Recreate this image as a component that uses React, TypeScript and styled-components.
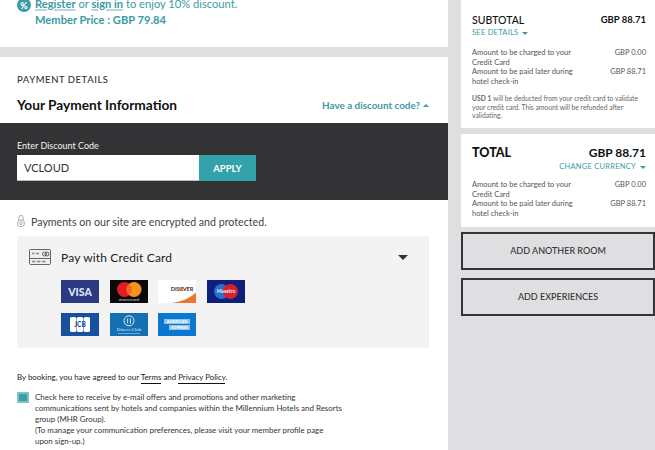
import React from "react";
import styled, { createGlobalStyle } from "styled-components";

const Global = createGlobalStyle`
  html, body { margin: 0; padding: 0; background: #dfdfe1; overflow: hidden; }
  body { font-family: Lato, "Open Sans", sans-serif; }
`;
const teal = "#3b9aa3";

const Page = styled.div`
  display: flex; width: 655px; height: 450px; overflow: hidden; background: #dfdfe1;
`;
const Main = styled.main`
  width: 448px; flex: none; display: flex; flex-direction: column;
  & > * { flex-shrink: 0; }
`;
const Promo = styled.section`
  height: 47px; background: #fff; display: flex; gap: 4px; padding-left: 17px; box-sizing: border-box; overflow: hidden;
`;
const PromoBadge = styled.div`
  width: 14px; height: 14px; border-radius: 50%; background: ${teal}; color: #fff; margin-top: -2px;
  display: flex; align-items: center; justify-content: center; font-size: 9px; font-weight: 900; flex: none;
`;
const PromoText = styled.div`
  font-size: 11.15px; line-height: 16px; color: ${teal}; margin-top: -4px;
`;
const PromoLink = styled.a`
  font-weight: 700; text-decoration: underline; text-decoration-color: #b5dadd; text-decoration-thickness: 2px; text-underline-offset: 1px;
`;
const PromoPrice = styled.div` font-weight: 700; `;
const Band = styled.div` height: 10px; background: #dfdfe1; `;
const Details = styled.section`
  height: 66px; background: #fff; box-sizing: border-box; padding: 16px 19px 0 17px;
`;
const Eyebrow = styled.div`
  font-size: 9.5px; line-height: 13px; letter-spacing: .55px; color: #333; font-weight: 500;
`;
const TitleRow = styled.div`
  display: flex; justify-content: space-between; align-items: center; margin-top: 10px;
`;
const Title = styled.h2` margin: 0; font-size: 13.7px; line-height: 18px; font-weight: 700; color: #111; `;
const DiscountLink = styled.a`
  font-size: 9.9px; font-weight: 700; color: ${teal}; display: flex; align-items: center; gap: 3px;
`;
const Caret = styled.span<{ $up?: boolean }>`
  display: inline-block; width: 0; height: 0;
  border-left: 3px solid transparent; border-right: 3px solid transparent;
  ${p => p.$up ? "border-bottom: 3px solid currentColor;" : "border-top: 3px solid currentColor;"}
`;
const DiscountPanel = styled.section`
  height: 77px; background: #333335; box-sizing: border-box; padding: 17px 0 0 17px;
`;
const DiscountLabel = styled.label` display: block; font-size: 9px; line-height: 12px; color: #f2f2f2; `;
const DiscountRow = styled.div` display: flex; margin-top: 3px; `;
const CodeInput = styled.div`
  width: 182px; height: 26px; background: #fff; box-sizing: border-box; padding-left: 7px; border-bottom: 1px solid #bbb;
  font-size: 11px; line-height: 26px; color: #333;
`;
const ApplyButton = styled.button`
  width: 57px; height: 26px; border: 0; padding: 0; background: #33a2ab; color: #fff; font: 700 9.5px Lato, sans-serif;
`;
const PaymentArea = styled.section`
  flex: 1; background: #fff; padding: 0 19px 0 17px;
`;
const SecureNote = styled.div`
  display: flex; align-items: center; gap: 6px; margin-top: 14px; height: 14px;
  font-size: 10.65px; color: #444;
`;
const CardPanel = styled.div`
  height: 112px; margin-top: 8px; background: #f3f3f4; box-sizing: border-box; padding: 10px 21px 0 12px;
`;
const CardHead = styled.div` display: flex; align-items: center; gap: 10px; height: 22px; `;
const CardHeadLabel = styled.div` flex: 1; font-size: 12px; color: #222; letter-spacing: .15px; `;
const HeadCaret = styled.span`
  width: 0; height: 0; border-left: 5px solid transparent; border-right: 5px solid transparent; border-top: 5px solid #333;
`;
const CardGrid = styled.div`
  display: grid; grid-template-columns: repeat(4, 38px); gap: 10px 10.67px; margin: 12px 0 0 32px;
`;
const Legal = styled.p`
  margin: 23px 0 0; font-size: 7.9px; line-height: 12px; color: #222;
`;
const LegalLink = styled.a`
  color: #222; border-bottom: 1px solid #111; padding-bottom: 1px;
`;
const ConsentRow = styled.div` display: flex; gap: 6px; margin-top: 9px; `;
const Check = styled.div`
  width: 12px; height: 11px; box-sizing: border-box; background: #3b9fa9; border: 2px solid #7cc3ca; flex: none;
`;
const ConsentText = styled.div`
  width: 312px; font-size: 7.95px; line-height: 11px; color: #333;
`;
const Aside = styled.aside`
  flex: 1; display: flex; flex-direction: column; padding-left: 13px; min-width: 0;
`;
const SummaryCard = styled.div`
  background: #fff; box-sizing: border-box; padding: 0 9px 0 11px;
`;
const SubCard = styled(SummaryCard)` height: 128px; padding-top: 13px; `;
const TotalCard = styled(SummaryCard)` height: 93px; margin-top: 6px; padding-top: 10px; `;
const SplitRow = styled.div` display: flex; justify-content: space-between; align-items: center; `;
const SubLabel = styled.div` font-size: 10.5px; line-height: 14px; font-weight: 500; color: #111; `;
const SubValue = styled.div` font-size: 9.5px; line-height: 14px; font-weight: 700; color: #111; `;
const SmallLink = styled.a<{ $right?: boolean }>`
  display: flex; align-items: center; gap: 4px; font-size: 7.5px; line-height: 12px; letter-spacing: .25px; color: ${teal};
  ${p => p.$right ? "justify-content: flex-end;" : ""}
`;
const Amounts = styled.div<{ $gap: number }>` margin-top: ${p => p.$gap}px; `;
const AmountRow = styled.div` display: flex; justify-content: space-between; font-size: 7.5px; line-height: 9.5px; color: #555; `;
const AmountLabel = styled.div` width: 108px; `;
const Note = styled.p`
  margin: 8px 0 0; font-size: 6.75px; line-height: 8.5px; color: #666;
  & b { font-weight: 700; }
`;
const TotalLabel = styled.div` font-size: 12.5px; line-height: 17px; font-weight: 900; color: #111; `;
const TotalValue = styled.div` font-size: 12px; line-height: 17px; font-weight: 700; color: #111; `;
const OutlineButton = styled.button`
  height: 38px; box-sizing: border-box; border: 2px solid #343436; background: #dfdfe1; color: #333;
  font: 500 9px Lato, sans-serif; padding: 0 0 2px; width: 194px;
`;
const Stack = styled.div` display: flex; flex-direction: column; gap: 8px; margin-top: 5px; `;

const Svg = styled.svg` display: block; `;

const VisaLogo = () => <Svg width="38" height="23" viewBox="0 0 38 23"><rect width="38" height="23" fill="#2b3a83"/><text x="19" y="15.5" textAnchor="middle" fontFamily="Lato" fontWeight="900" fontSize="10.5" fill="#dfe3f2">VISA</text></Svg>;
const McLogo = () => <Svg width="38" height="23" viewBox="0 0 38 23"><rect width="38" height="23" fill="#0a0a0a"/><circle cx="14.5" cy="9.5" r="7.5" fill="#e11d22"/><circle cx="24" cy="9.5" r="7.5" fill="#f6921e"/><path d="M19.2 3.7a7.5 7.5 0 0 1 0 11.6a7.5 7.5 0 0 1 0-11.6z" fill="#f26522"/><text x="19" y="21.3" textAnchor="middle" fontFamily="Lato" fontSize="4.2" fill="#ddd">mastercard</text></Svg>;
const DiscoverLogo = () => <Svg width="38" height="23" viewBox="0 0 38 23"><rect width="38" height="23" fill="#fff"/><path d="M38 12.5V23H14C24 21.5 32 18 38 12.5z" fill="#e6792b"/><text x="19" y="11" textAnchor="middle" fontFamily="Lato" fontWeight="700" fontSize="5.6" fill="#333">DISC</text><circle cx="23" cy="9" r="2" fill="#e6792b"/><text x="30" y="11" textAnchor="middle" fontFamily="Lato" fontWeight="700" fontSize="5.6" fill="#333">VER</text></Svg>;
const MaestroLogo = () => <Svg width="38" height="23" viewBox="0 0 38 23"><rect width="38" height="23" fill="#0e1f7c"/><circle cx="14.5" cy="11.5" r="7.5" fill="#2a6fc9"/><circle cx="23.5" cy="11.5" r="7.5" fill="#d8202a"/><text x="19" y="13.3" textAnchor="middle" fontFamily="Lato" fontWeight="700" fontSize="5" fill="#eef">Maestro</text></Svg>;
const JcbLogo = () => <Svg width="38" height="23" viewBox="0 0 38 23"><rect width="38" height="23" fill="#17509c"/><rect x="9" y="4" width="6.4" height="15" rx="1.5" fill="#fff"/><rect x="15.8" y="4" width="6.4" height="15" rx="1.5" fill="#fff"/><rect x="22.6" y="4" width="6.4" height="15" rx="1.5" fill="#fff"/><text x="19" y="14" textAnchor="middle" fontFamily="Lato" fontWeight="900" fontSize="6.5" fill="#17509c">JCB</text></Svg>;
const DinersLogo = () => <Svg width="38" height="23" viewBox="0 0 38 23"><rect width="38" height="23" fill="#1470b3"/><circle cx="19" cy="7.8" r="5" fill="none" stroke="#dcecf8" strokeWidth="1"/><path d="M17.6 5.4v5M20.4 5.4v5" stroke="#dcecf8" strokeWidth="1"/><text x="19" y="18" textAnchor="middle" fontFamily="Liberation Serif" fontSize="5" fill="#dcecf8">Diners Club</text><path d="M8 20.5h22" stroke="#a8cde8" strokeWidth=".6"/></Svg>;
const AmexLogo = () => <Svg width="38" height="23" viewBox="0 0 38 23"><rect width="38" height="23" fill="#0b78cf"/><rect x="6" y="6" width="26" height="5" fill="#8fc3ea"/><rect x="11" y="12" width="21" height="5" fill="#8fc3ea"/><text x="19" y="10" textAnchor="middle" fontFamily="Lato" fontWeight="700" fontSize="3.9" fill="#fff">AMERICAN</text><text x="21.5" y="16" textAnchor="middle" fontFamily="Lato" fontWeight="700" fontSize="3.9" fill="#fff">EXPRESS</text></Svg>;

const LockIcon = () => (
  <Svg width="8" height="12" viewBox="0 0 9 14" fill="none" stroke="#9a9a9a">
    <path d="M2 6V3a2.5 2.5 0 0 1 5 0v3" strokeWidth="1" />
    <rect x="0.7" y="6" width="7.6" height="7.4" rx="2.5" strokeWidth="1" />
    <circle cx="4.5" cy="9.7" r="1.5" strokeWidth="1" />
  </Svg>
);
const CreditCardIcon = () => (
  <Svg width="22" height="16" viewBox="0 0 22 16" fill="none" stroke="#555" strokeWidth=".9">
    <rect x=".5" y=".5" width="21" height="15" rx="1" fill="#eee" />
    <path d="M.5 9.5h21" />
    <path d="M3 4.5h2.5M7 4.5h3" strokeWidth="1.4" stroke="#888" />
    <circle cx="15.5" cy="5" r="2" /><circle cx="18" cy="5" r="2" />
    <path d="M3 12.5h3.5M8 12.5h3.5M13 12.5h3.5" strokeWidth="1.6" stroke="#888" />
  </Svg>
);

const AmountList = ({ gap }: { gap: number }) => (
  <Amounts $gap={gap}>
    <AmountRow><AmountLabel>Amount to be charged to your Credit Card</AmountLabel><span>GBP 0.00</span></AmountRow>
    <AmountRow><AmountLabel>Amount to be paid later during hotel check-in</AmountLabel><span>GBP 88.71</span></AmountRow>
  </Amounts>
);

export default function App() {
  return (
    <Page>
      <Global />
      <Main>
        <Promo>
          <PromoBadge>%</PromoBadge>
          <PromoText>
            <PromoLink>Register</PromoLink> or <PromoLink>sign in</PromoLink> to enjoy 10% discount.
            <PromoPrice>Member Price : GBP 79.84</PromoPrice>
          </PromoText>
        </Promo>
        <Band />
        <Details>
          <Eyebrow>PAYMENT DETAILS</Eyebrow>
          <TitleRow>
            <Title>Your Payment Information</Title>
            <DiscountLink>Have a discount code? <Caret $up /></DiscountLink>
          </TitleRow>
        </Details>
        <DiscountPanel>
          <DiscountLabel>Enter Discount Code</DiscountLabel>
          <DiscountRow>
            <CodeInput>VCLOUD</CodeInput>
            <ApplyButton>APPLY</ApplyButton>
          </DiscountRow>
        </DiscountPanel>
        <PaymentArea>
          <SecureNote><LockIcon />Payments on our site are encrypted and protected.</SecureNote>
          <CardPanel>
            <CardHead>
              <CreditCardIcon />
              <CardHeadLabel>Pay with Credit Card</CardHeadLabel>
              <HeadCaret />
            </CardHead>
            <CardGrid>
              <VisaLogo /><McLogo /><DiscoverLogo /><MaestroLogo />
              <JcbLogo /><DinersLogo /><AmexLogo />
            </CardGrid>
          </CardPanel>
          <Legal>By booking, you have agreed to our <LegalLink>Terms</LegalLink> and <LegalLink>Privacy Policy</LegalLink>.</Legal>
          <ConsentRow>
            <Check />
            <ConsentText>
              Check here to receive by e-mail offers and promotions and other marketing<br />
              communications sent by hotels and companies within the Millennium Hotels and Resorts<br />
              group (MHR Group).<br />
              (To manage your communication preferences, please visit your member profile page<br />
              upon sign-up.)
            </ConsentText>
          </ConsentRow>
        </PaymentArea>
      </Main>
      <Aside>
        <SubCard>
          <SplitRow><SubLabel>SUBTOTAL</SubLabel><SubValue>GBP 88.71</SubValue></SplitRow>
          <SmallLink>SEE DETAILS <Caret /></SmallLink>
          <AmountList gap={9} />
          <Note><b>USD 1</b> will be deducted from your credit card to validate your credit card. This amount will be refunded after validating.</Note>
        </SubCard>
        <TotalCard>
          <SplitRow><TotalLabel>TOTAL</TotalLabel><TotalValue>GBP 88.71</TotalValue></SplitRow>
          <SmallLink $right>CHANGE CURRENCY <Caret /></SmallLink>
          <AmountList gap={7} />
        </TotalCard>
        <Stack>
          <OutlineButton>ADD ANOTHER ROOM</OutlineButton>
          <OutlineButton>ADD EXPERIENCES</OutlineButton>
        </Stack>
      </Aside>
    </Page>
  );
}
